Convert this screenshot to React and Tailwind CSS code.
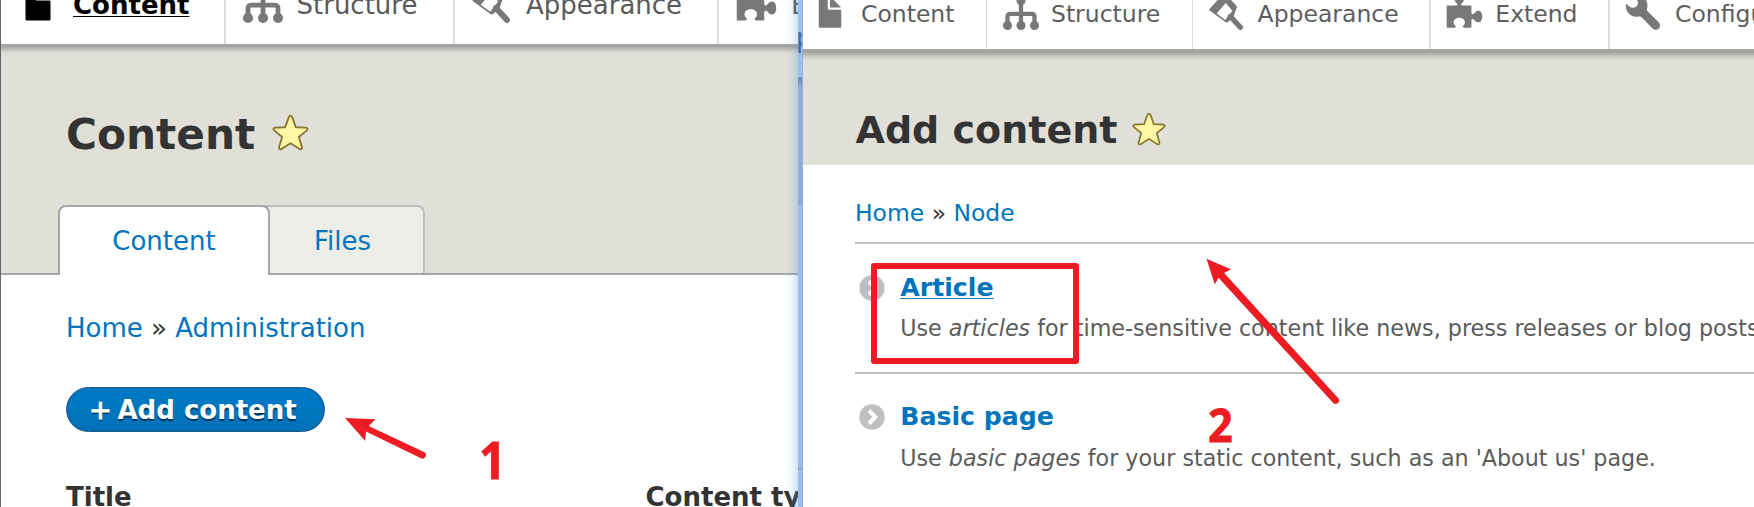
import React from "react";

function FileIcon() {
  return (
    <path d="M12.5 7h-5c-.28 0-.5-.22-.5-.5v-5c0-.28-.22-.5-.5-.5h-3c-.28 0-.5.22-.5.5v13.03c0 .28.22.5.5.5h9c.28 0 .5-.22.5-.5V7.5c0-.28-.22-.5-.5-.5zM8.5 6h4c.28 0 .34-.16.15-.35L8.35 1.35C8.16 1.16 8 1.22 8 1.5v4c0 .28.22.5.5.5z" />
  );
}

function StructureIcon() {
  return (
    <>
      <circle cx="8" cy="3" r="2" />
      <circle cx="2" cy="14" r="2" />
      <circle cx="8" cy="14" r="2" />
      <circle cx="14" cy="14" r="2" />
      <path
        d="M8 3v10M2 13V9.900C2 9.300 2.500 8.800 3.100 8.800h9.800c.6 0 1.100.5 1.100 1.100V13"
        fill="none"
        stroke="currentColor"
        strokeWidth="1.9"
      />
    </>
  );
}

function BrushIcon() {
  return (
    <>
      <path
        fillRule="evenodd"
        d="M1.200 6.500L7.700-.5L13.100 5.200Q13.400 5.700 13.100 6.300L12 9.500L9.600 12.200Q8.800 12.900 8 12.300L1.200 7.300Q.8 6.900 1.200 6.500zM4.300 8.700L8.100 11.500L11.300 7.400L8.300 4z"
      />
      <path d="M10.400 10l4.400 4.800" fill="none" stroke="currentColor" strokeWidth="2.400" strokeLinecap="round" />
    </>
  );
}

function PuzzleIcon() {
  return (
    <path d="M.3 5.5c0-.3.2-.4.4-.4h4c.5 0 .5-.5.2-.8C4.3 3.700 3.800 3 3.800 2.300c0-1.100.9-1.700 2.100-1.700s2.100.6 2.100 1.700c0 .7-.5 1.400-1.100 2-.3.300-.3.800.2.800h3.800c.3 0 .4.200.4.400v2.700c0 .700.4.900.9.700.6-.300 1-1.500 2.200-1.500 1 0 1.700 1.100 1.700 2.600s-.7 2.600-1.700 2.600c-1.200 0-1.600-1.100-2.200-1.400-.5-.200-.9 0-.9.700v2.700c0 .300-.2.400-.4.400H8.200c-.6 0-1-.5-.6-.9.400-.4.8-.8.8-1.600 0-1.200-1.100-2-2.500-2s-2.500.8-2.500 2c0 .8.400 1.200.8 1.600.4.400 0 .9-.6.900H.7c-.3 0-.4-.2-.4-.4z" />
  );
}

function WrenchIcon() {
  return (
    <path d="M1 4.200c.9 1.200 2 2 3.200 1.900C5.500 6 6.300 5 6.200 3.700 6.100 2.500 5.100 1.700 3.900 1c1.900-.9 3.900-.4 5.300 1 1.200 1.300 1.500 3 1 4.600-.1.500 0 .8.300 1.100l4.900 4.900c.8.800.8 1.900.1 2.700-.8.800-2 .8-2.800 0L7.800 10.300c-.4-.4-.7-.4-1.200-.3-1.600.4-3.200 0-4.400-1.200C1 7.500.5 5.800 1 4.200z" />
  );
}

function Icon({ className, children }) {
  return (
    <svg viewBox="0 0 16 16" fill="currentColor" className={"block shrink-0 overflow-visible " + className}>
      {children}
    </svg>
  );
}

function Star({ className }) {
  return (
    <svg viewBox="0 0 38 38" className={"block shrink-0 " + className}>
      <path
        d="M17.300 3.200Q19 .400 20.700 3.200L24.500 13.600 34.800 14Q37.600 14.600 35.800 16.800L27.600 23.600 30.700 34Q31 36.900 28.300 36L19 30 9.700 36Q7 36.900 7.300 34L10.400 23.600 2.200 16.800Q.4 14.600 3.200 14L13.500 13.600z"
        fill="#fff7a6"
        stroke="#85762f"
        strokeWidth="1.9"
        strokeLinejoin="round"
      />
    </svg>
  );
}

function Bullet({ className }) {
  return (
    <svg viewBox="0 0 26 26" className={"block size-[26px] shrink-0 " + className}>
      <circle cx="13" cy="13" r="12.700" fill="#bfbfbf" />
      <path d="M10 6.500l6.300 6.500L10 19.500" fill="none" stroke="#fff" strokeWidth="4" />
    </svg>
  );
}

function ContentPage() {
  return (
    <section className="relative h-[507px] w-[798px] shrink-0 overflow-hidden border-l border-[#666] bg-white text-[26px] text-[#333]">
      <nav className="flex h-[44px] text-[#5a5a5a]">
        <div className="flex w-[225px] shrink-0 border-r-2 border-[#ddd] pl-[17px] text-black">
          <Icon className="-mt-[17.5px] size-[40px]"><FileIcon /></Icon>
          <a className="ml-[15px] font-bold leading-[10px] underline decoration-1 underline-offset-[2px]">Content</a>
        </div>
        <div className="flex w-[229px] shrink-0 border-r-2 border-[#ddd] pl-[17px]">
          <Icon className="-mt-[17.5px] size-[40px] text-[#787878]"><StructureIcon /></Icon>
          <a className="ml-[13.500px] leading-[10px]">Structure</a>
        </div>
        <div className="flex w-[264px] shrink-0 border-r-2 border-[#ddd] pl-[15px]">
          <Icon className="-mt-[17.5px] size-[40px] text-[#787878]"><BrushIcon /></Icon>
          <a className="ml-[16px] leading-[10px]">Appearance</a>
        </div>
        <div className="flex shrink-0 pl-[17px]">
          <Icon className="-mt-[17.5px] size-[40px] text-[#787878]"><PuzzleIcon /></Icon>
          <a className="ml-[15px] leading-[10px]">Extend</a>
        </div>
      </nav>
      <header className="flex h-[231px] flex-col justify-between border-b-2 border-[#a6a6a6] bg-[#e0e0d8] bg-[linear-gradient(#a9a9a6_0px,#a2a29e_2px,#b4b4ae_4px,#d0d0c9_7px,#dddcd5_9px,#e0e0d8_12px)]">
        <div className="flex pl-[65px] pt-[71px]">
          <h1 className="text-[42.250px] font-bold leading-[40px]">Content</h1>
          <Star className="ml-[17px] -mt-[1px] size-[37px]" />
        </div>
        <div className="-mb-[2px] flex pl-[57px] text-[#0074bd]">
          <a className="relative flex h-[70px] w-[212px] items-center justify-center rounded-t-[8px] border-2 border-b-0 border-[#a6a6a6] bg-white pt-[1px]">Content</a>
          <a className="-ml-[8px] mb-[2px] flex h-[68px] w-[163px] items-center rounded-tr-[8px] border-2 border-b-0 border-l-0 border-[#bfbfbf] bg-[#edede8] pl-[52px] pt-[3px]">Files</a>
        </div>
      </header>
      <main className="flex flex-col pl-[65px]">
        <nav className="mt-[33px] leading-[40px] whitespace-pre">
          <a className="text-[#0074bd]">Home</a>
          {" » "}
          <a className="text-[#0074bd]">Administration</a>
        </nav>
        <button className="mt-[39px] flex h-[45px] w-[259px] items-center rounded-full border border-[#1e5c90] bg-gradient-to-b from-[#007bc6] to-[#0071b8] pl-[22px] font-bold text-white shadow-[inset_0_0_2px_#1e5c90] [text-shadow:0_2px_1px_rgba(0,0,0,0.55)]">
          <span className="w-[28.500px] text-left text-[27px] font-normal leading-[40px] [-webkit-text-stroke:1px_white]">+</span>
          <span className="leading-[40px]">Add content</span>
        </button>
        <div className="mt-[45px] flex font-bold leading-[40px]">
          <span className="w-[579.500px] shrink-0">Title</span>
          <span className="shrink-0">Content type</span>
        </div>
      </main>
      <div className="absolute inset-y-0 right-0 w-[12px] bg-gradient-to-r from-[#5c9df0]/0 via-[#5c9df0]/10 to-[#5c9df0]/30" />
    </section>
  );
}

function WindowEdge() {
  return (
    <div className="flex h-[507px] w-[5px] shrink-0 flex-col overflow-hidden border-r border-[#8bb3e6] bg-[#a4bde1]">
      <div className="h-[77px] shrink-0 overflow-hidden bg-[#a1c0e8] pt-[18px] text-[26px] leading-[40px] text-[#4f6d94]"><span className="-ml-[2px]">p</span></div>
      <div className="h-[129px] shrink-0 bg-[#92adcf] bg-[linear-gradient(#7289b0_0px,#7990b6_3px,#92adcf_10px)]" />
      <div className="h-[262px] shrink-0" />
      <div className="h-[2px] shrink-0 bg-[#8fa9d0]" />
      <div className="grow bg-gradient-to-b from-[#a4bde1] to-[#9dbde8]" />
    </div>
  );
}

function AddContentPage() {
  return (
    <section className="h-[507px] min-w-0 grow overflow-hidden bg-white text-[23.500px] text-[#333]">
      <nav className="flex h-[49px] text-[#5e5e5e]">
        <div className="flex w-[184.300px] shrink-0 border-r border-[#d8d8d8] pl-[8.5px]">
          <Icon className="-mt-[6.5px] size-[36px] text-[#787878]"><FileIcon /></Icon>
          <a className="ml-[13.500px] leading-[28px]">Content</a>
        </div>
        <div className="flex w-[206px] shrink-0 border-r border-[#d8d8d8] pl-[16px]">
          <Icon className="-mt-[6.5px] size-[36px] text-[#787878]"><StructureIcon /></Icon>
          <a className="ml-[11.700px] leading-[28px]">Structure</a>
        </div>
        <div className="flex w-[237.700px] shrink-0 border-r-2 border-[#ddd] pl-[13.5px]">
          <Icon className="-mt-[6.5px] size-[36px] text-[#787878]"><BrushIcon /></Icon>
          <a className="ml-[14.800px] leading-[28px]">Appearance</a>
        </div>
        <div className="flex w-[179px] shrink-0 border-r-2 border-[#ddd] pl-[15px]">
          <Icon className="-mt-[6.5px] size-[36px] text-[#787878]"><PuzzleIcon /></Icon>
          <a className="ml-[13.300px] leading-[28px]">Extend</a>
        </div>
        <div className="flex shrink-0 pl-[14px]">
          <Icon className="-mt-[6.5px] size-[36px] text-[#787878]"><WrenchIcon /></Icon>
          <a className="ml-[15px] leading-[28px]">Configuration</a>
        </div>
      </nav>
      <header className="flex h-[116px] bg-[#e0e0d8] bg-[linear-gradient(#a9a9a6_0px,#a2a29e_3px,#b4b4ae_5px,#d0d0c9_8px,#e0e0d8_12px)] pl-[52.5px] pt-[61px]">
        <h1 className="text-[38px] font-bold leading-[40px]">Add content</h1>
        <Star className="ml-[15px] mt-[2px] size-[34px]" />
      </header>
      <main className="ml-[52px]">
        <nav className="h-[77px] pt-[28px] text-[23.450px] leading-[40px] whitespace-pre">
          <a className="text-[#0074bd]">Home</a>
          {" » "}
          <a className="text-[#0074bd]">Node</a>
        </nav>
        <ul>
          <li className="flex h-[130px] border-t-2 border-[#c4c4c4] pl-[3.600px] pt-[24px] whitespace-nowrap">
            <Bullet className="mt-[6.500px]" />
            <div className="ml-[15.700px]">
              <h2 className="text-[25.200px] font-bold leading-[40px] text-[#0074bd] underline decoration-1 underline-offset-[2px]">Article</h2>
              <p className="text-[22.230px] leading-[41px] text-[#5b5b5b]">
                Use <em>articles</em> for time-sensitive content like news, press releases or blog posts.
              </p>
            </div>
          </li>
          <li className="flex border-t-2 border-[#bfbfbf] pl-[3.600px] pt-[23px] whitespace-nowrap">
            <Bullet className="mt-[7px]" />
            <div className="ml-[15.700px]">
              <h2 className="text-[25.200px] font-bold leading-[40px] text-[#0074bd]">Basic page</h2>
              <p className="text-[22.230px] leading-[42px] text-[#5b5b5b]">
                Use <em>basic pages</em> for your static content, such as an 'About us' page.
              </p>
            </div>
          </li>
        </ul>
      </main>
    </section>
  );
}

function Annotations() {
  return (
    <div className="pointer-events-none absolute inset-0 text-[#ed1c24]">
      <svg viewBox="0 0 1754 507" className="absolute inset-0 h-[507px] w-[1754px]">
        <path d="M345 418l30.500 1.200-6.800 6.700L424 452a3.400 3.400 0 0 1-3 6.200L366 431.500l-.8 9.400z" fill="currentColor" />
        <path d="M1206.500 258.700l24.500 10.500-6.800 3.700L1338.500 398.500a3.500 3.500 0 0 1-5.200 4.600L1218.500 277.700l-3.700 6.800z" fill="currentColor" />
      </svg>
      <div className="absolute left-[871px] top-[263px] h-[101px] w-[208px] rounded-[3px] border-[6px] border-[#ed1c24]" />
      <span className="absolute left-[479px] top-[429px] origin-left scale-x-90 font-['Open_Sans',sans-serif] text-[52px] font-bold leading-[60px] [-webkit-text-stroke:0.800px_#ed1c24]">1</span>
      <span className="absolute left-[1208px] top-[394px] origin-left scale-x-92 font-['Open_Sans',sans-serif] text-[47px] font-bold leading-[60px] [-webkit-text-stroke:0.800px_#ed1c24]">2</span>
    </div>
  );
}

export default function App() {
  return (
    <div className="relative flex h-[507px] w-[1754px] overflow-hidden bg-white font-['DejaVu_Sans',sans-serif]">
      <ContentPage />
      <WindowEdge />
      <AddContentPage />
      <Annotations />
    </div>
  );
}
